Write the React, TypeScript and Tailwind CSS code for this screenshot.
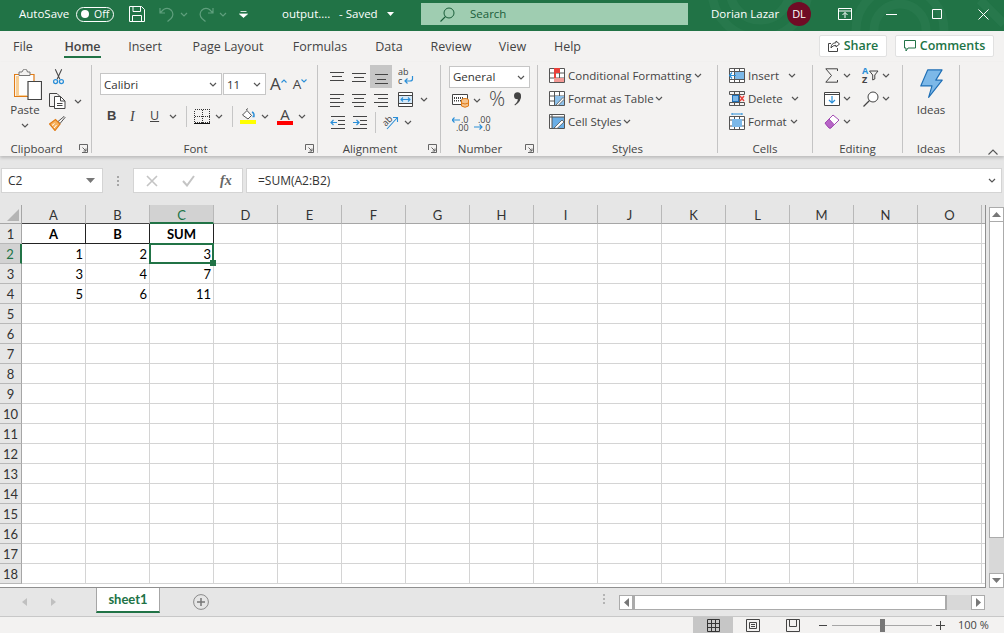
import React from "react";

const UI = "font-['Open_Sans','Noto_Sans',sans-serif]";
const CELL = "font-['Lato','Noto_Sans',sans-serif]";
const BLUE = "#2b8fd8";

function Chev({ color = "#555" }: { color?: string }) {
  return (
    <svg width="8" height="5" viewBox="0 0 8 5" className="shrink-0">
      <path d="M1 1 L4 4 L7 1" fill="none" stroke={color} strokeWidth="1.2" />
    </svg>
  );
}

function Launcher() {
  return (
    <svg width="9" height="9" viewBox="0 0 9 9" className="absolute right-[3px] top-[2px]">
      <path d="M.5 6V.5H8.500V8.500H3M3.500 3.500L7 7M7 4.500V7H4.500" fill="none" stroke="#666" strokeWidth="1" />
    </svg>
  );
}

function Lines({ rows, y = 0 }: { rows: number[][]; y?: number }) {
  return (
    <svg width="16" height="14" viewBox="0 0 16 14" className="shrink-0">
      {rows.map((r, i) => (
        <path key={i} d={`M${r[0]} ${r[2] + 0.5 + y}H${r[1]}`} stroke="#444" strokeWidth="1" />
      ))}
    </svg>
  );
}

function Indent({ out }: { out?: boolean }) {
  return (
    <svg width="16" height="14" viewBox="0 0 16 14" className="shrink-0">
      <path d="M1 .5H15M8 4.500H15M8 8.500H15M1 12.500H15" stroke="#444" strokeWidth="1" />
      {out ? (
        <path d="M1 6.500H7M3.500 4L1 6.500L3.500 9" stroke={BLUE} strokeWidth="1.2" fill="none" />
      ) : (
        <path d="M1 6.500H7M4.500 4L7 6.500L4.500 9" stroke={BLUE} strokeWidth="1.2" fill="none" />
      )}
    </svg>
  );
}

function PasteIcon() {
  return (
    <svg width="28" height="31" viewBox="0 0 28 31">
      <path d="M.5 5.500H20V27.500H.5Z" fill="#fdfdfd" stroke="#e07b16" strokeWidth="1.2" />
      <path d="M2 7H5V26H13V27H2Z" fill="#f8cf95" />
      <path d="M5 5V3H8Q9 0 11 0Q13 0 13.500 3H16V6.500H5Z" fill="#f3f2f1" stroke="#777" strokeWidth="1" />
      <path d="M14 12.500H27.500V30.500H14Z" fill="#fff" stroke="#444" strokeWidth="1.200" />
    </svg>
  );
}

function CutIcon() {
  return (
    <svg width="11" height="16" viewBox="0 0 12 17">
      <path d="M2.500 0L7.500 11M9.500 0L4.500 11" stroke="#444" strokeWidth="1.100" fill="none" />
      <circle cx="2.800" cy="13.500" r="2.200" fill="none" stroke={BLUE} strokeWidth="1.400" />
      <circle cx="9.200" cy="13.500" r="2.200" fill="none" stroke={BLUE} strokeWidth="1.400" />
    </svg>
  );
}

function CopyIcon() {
  return (
    <svg width="17" height="16" viewBox="0 0 17 16">
      <path d="M5 13.500H.5V.5H8L11 3.500" fill="none" stroke="#444" />
      <path d="M5.500 3.500H11.500L16 8V15.500H5.500Z" fill="#fff" stroke="#444" />
      <path d="M11.500 3.500V8H16M8 10.500H13.500M8 12.500H13.500" fill="none" stroke="#444" />
    </svg>
  );
}

function BrushIcon() {
  return (
    <svg width="17" height="15" viewBox="0 0 17 15">
      <path d="M9 5.500L11 7.500L16 1.500L15 .5Z" fill="#f3f2f1" stroke="#555" />
      <path d="M.5 8L6.500 3.500L11 8L6 14.500Z" fill="#f7b15e" stroke="#e07b16" strokeWidth="1.200" />
      <path d="M3 9.500L5.500 7.500M5 12L7.500 9" stroke="#fff" />
    </svg>
  );
}

function GrowA({ up }: { up?: boolean }) {
  return (
    <span className="relative flex items-end">
      <span className={`${UI} ${up ? "text-[17px]" : "text-[13.500px]"} leading-[16px] text-[#444]`}>A</span>
      <svg width="6" height="4" viewBox="0 0 6 4" className="mb-[9px]">
        {up ? (
          <path d="M.5 3.500L3 1L5.500 3.500" stroke={BLUE} fill="none" strokeWidth="1.100" />
        ) : (
          <path d="M.5 .5L3 3L5.500 .5" stroke={BLUE} fill="none" strokeWidth="1.100" />
        )}
      </svg>
    </span>
  );
}

function BorderIcon() {
  return (
    <svg width="16" height="15" viewBox="0 0 16 15" shapeRendering="crispEdges">
      <path d="M.5 .5H15.500V13.500H.5ZM8 .5V13.500M.5 7H15.500" fill="none" stroke="#333" strokeDasharray="1 1" />
      <path d="M0 14.500H16" stroke="#111" strokeWidth="1.200" />
    </svg>
  );
}

function FillIcon() {
  return (
    <svg width="16" height="16" viewBox="0 0 16 16">
      <path d="M2.500 7L7 2.500L11.500 7.500L8 11Z" fill="#fff" stroke="#555" />
      <path d="M6 2L8 0.500" stroke="#555" />
      <path d="M12 4Q14.500 5 14 8.500H12.500" fill="none" stroke={BLUE} strokeWidth="1.400" />
      <rect x="0" y="12" width="16" height="4" fill="#ffff00" />
    </svg>
  );
}

function FontColorIcon() {
  return (
    <span className="flex flex-col items-center w-[16px]">
      <span className={`${UI} text-[15px] leading-[13px] text-[#444]`}>A</span>
      <span className="w-[16px] h-[4px] bg-[#ff0000]" />
    </span>
  );
}

function WrapIcon() {
  return (
    <span className="relative flex flex-col w-[16px] h-[17px] leading-[8px] text-[9px] text-[#444]">
      <span className="h-[8px]">ab</span>
      <span className="h-[9px] pt-[1px]">c</span>
      <svg className="absolute left-0 top-0" width="16" height="17" viewBox="0 0 16 17">
        <path d="M14.500 8V11Q14.500 13 12 13H7M9.500 10.500L7 13L9.500 15.500" fill="none" stroke={BLUE} strokeWidth="1.200" />
      </svg>
    </span>
  );
}

function MergeIcon() {
  return (
    <svg width="15" height="15" viewBox="0 0 15 15">
      <path d="M.5 .5H14.500V14.500H.5ZM.5 3.500H14.500M.5 11.500H14.500" fill="#fff" stroke="#444" />
      <rect x="1" y="4" width="13" height="7" fill="#d6e9f8" />
      <path d="M3 7.500H12M5 5.500L3 7.500L5 9.500M10 5.500L12 7.500L10 9.500" fill="none" stroke={BLUE} strokeWidth="1.100" />
    </svg>
  );
}

function OrientIcon() {
  return (
    <span className="relative block w-[17px] h-[15px]">
      <span className="absolute left-[0px] top-[1px] text-[9px] leading-[10px] text-[#444] -rotate-45">ab</span>
      <svg className="absolute left-0 top-0" width="17" height="15" viewBox="0 0 17 15">
        <path d="M5 14L15 3M11 2.500H15.500V7" fill="none" stroke={BLUE} strokeWidth="1.100" />
      </svg>
    </span>
  );
}

function AccountingIcon() {
  return (
    <svg width="18" height="15" viewBox="0 0 18 15">
      <path d="M.5 1.500H15.500V11.500H.5Z" fill="#fff" stroke="#444" />
      <path d="M2.500 4V8.500M4.500 4V8.500M6.500 4V8.500M8.500 4V8.500M10.500 4V8.500" stroke="#444" strokeDasharray="2 1" />
      <ellipse cx="13" cy="7" rx="3.500" ry="1.500" fill="#f5c38d" stroke="#e07b16" />
      <path d="M9.500 7V13Q13 15.500 16.500 13V7" fill="#f5c38d" stroke="#e07b16" />
      <path d="M9.500 10Q13 12 16.500 10" fill="none" stroke="#e07b16" />
    </svg>
  );
}

function DecimalIcon({ more }: { more?: boolean }) {
  const t = "absolute text-[9px] leading-[8px] text-[#444]";
  return (
    <span className="relative block w-[17px] h-[16px]">
      {more ? (
        <>
          <span className={`${t} left-[4px] top-0`}>.00</span>
          <span className={`${t} left-[9px] top-[8px]`}>.0</span>
          <svg className="absolute left-0 top-[7px]" width="9" height="8" viewBox="0 0 9 8">
            <path d="M0 4H8M5.500 1.500L8 4L5.500 6.500" fill="none" stroke={BLUE} strokeWidth="1.100" />
          </svg>
        </>
      ) : (
        <>
          <span className={`${t} left-[9px] top-0`}>.0</span>
          <span className={`${t} left-[4px] top-[8px]`}>.00</span>
          <svg className="absolute left-0 top-0" width="9" height="8" viewBox="0 0 9 8">
            <path d="M0 4H8M2.500 1.500L0 4L2.500 6.500" fill="none" stroke={BLUE} strokeWidth="1.100" />
          </svg>
        </>
      )}
    </span>
  );
}

function CommaIcon() {
  return (
    <svg width="9" height="14" viewBox="0 0 9 14">
      <circle cx="4.500" cy="3.800" r="3.500" fill="#444" />
      <path d="M8 3.500Q8.500 9.500 2 13.500L1.500 12.500Q5 10 5 6Z" fill="#444" />
    </svg>
  );
}

function TableBase({ children }: { children?: React.ReactNode }) {
  return (
    <svg width="16" height="15" viewBox="0 0 16 15" className="shrink-0">
      <path d="M.5 .5H15.500V14.500H.5ZM5.500 .5V14.500M10.500 .5V14.500M.5 5H15.500M.5 10H15.500" fill="#fff" stroke="#555" />
      {children}
    </svg>
  );
}

function CondIcon() {
  return (
    <TableBase>
      <rect x="5" y="0" width="6" height="5" fill="#e8403a" />
      <rect x="5" y="5" width="2" height="5" fill="#e8403a" />
      <rect x="5" y="10" width="10" height="4" fill="#f49a96" />
    </TableBase>
  );
}

function TableFmtIcon() {
  return (
    <TableBase>
      <rect x="6" y="5" width="9" height="9" fill="#8cc0ea" />
      <path d="M7 14L14 6.500L15.500 8L9 14.500Z" fill="#fff" stroke="#555" strokeWidth=".8" />
    </TableBase>
  );
}

function CellStyleIcon() {
  return (
    <svg width="16" height="15" viewBox="0 0 16 15" className="shrink-0">
      <path d="M.5 .5H15.500V14.500H.5Z" fill="#fff" stroke="#555" />
      <rect x="3" y="3" width="12" height="11" fill="#6aaee6" />
      <path d="M.5 3H15.500M3 .5V14.500" stroke="#555" />
      <path d="M5 14L13 6L15 8L8 14.500Z" fill="#fff" stroke="#555" strokeWidth=".8" />
    </svg>
  );
}

function InsertIcon() {
  return (
    <svg width="16" height="15" viewBox="0 0 16 15" className="shrink-0">
      <path d="M.5 .5H15.500V14.500H.5ZM.5 3.500H15.500M.5 11.500H15.500M5.500 .5V14.500M10.500 .5V14.500" fill="#fff" stroke="#555" />
      <rect x="6" y="4" width="9" height="7" fill="#7cb8e8" />
      <path d="M0 7.500H7M3 4.500L0.500 7.500L3 10.500" fill="#fff" stroke={BLUE} strokeWidth="1.200" />
    </svg>
  );
}

function DeleteIcon() {
  return (
    <svg width="16" height="15" viewBox="0 0 16 15" className="shrink-0">
      <path d="M.5 .5H15.500M.5 14.500H15.500M.5 3.500H15.500M.5 11.500H15.500M5.500 .5V14.500M10.500 .5V14.500M.5 .5V3.500M15.500 .5V3.500M.5 11.500V14.500M15.500 11.500V14.500" fill="none" stroke="#555" />
      <rect x="3.500" y="4.500" width="6" height="6" fill="#7cb8e8" stroke="#1f6fb5" />
      <path d="M11 5L15 10M15 5L11 10" stroke="#e8403a" strokeWidth="1.400" />
    </svg>
  );
}

function FormatIcon() {
  return (
    <svg width="16" height="17" viewBox="0 0 16 17" className="shrink-0">
      <path d="M.5 3.500H15.500V16.500H.5ZM.5 7H15.500M.5 13H15.500M5.500 3.500V16.500M10.500 3.500V16.500" fill="#fff" stroke="#555" />
      <rect x="3" y="6" width="10" height="8" fill="#7cb8e8" />
      <path d="M3 1H13M3 0V2M13 0V2" stroke={BLUE} />
    </svg>
  );
}

function SigmaIcon() {
  return (
    <svg width="13" height="15" viewBox="0 0 13 15">
      <path d="M12.500 3V.8H.8L6.500 7.500L.8 14.200H12.500V12" fill="none" stroke="#444" strokeWidth="1" />
    </svg>
  );
}

function SortIcon() {
  return (
    <span className="relative block w-[17px] h-[17px]">
      <span className="absolute left-0 top-0 text-[9px] leading-[8px] font-bold text-[#2b8fd8]">A</span>
      <span className="absolute left-0 top-[9px] text-[9px] leading-[8px] font-bold text-[#444]">Z</span>
      <svg className="absolute left-0 top-0" width="17" height="17" viewBox="0 0 17 17">
        <path d="M7.500 4H16L12.800 8V12L10.700 13V8Z" fill="none" stroke="#444" />
      </svg>
    </span>
  );
}

function FillDown() {
  return (
    <svg width="16" height="14" viewBox="0 0 16 14">
      <path d="M.5 .5H15.500V13.500H.5Z" fill="#fff" stroke="#444" />
      <path d="M.5 2.500H15.500" stroke="#444" />
      <path d="M8 4V11M5 8L8 11L11 8" fill="none" stroke={BLUE} strokeWidth="1.200" />
    </svg>
  );
}

function FindIcon() {
  return (
    <svg width="16" height="16" viewBox="0 0 16 16">
      <circle cx="10" cy="6" r="5" fill="#fff" stroke="#444" />
      <path d="M6.500 9.500L.5 15.500" stroke="#444" strokeWidth="1.300" />
    </svg>
  );
}

function EraserIcon() {
  return (
    <svg width="16" height="15" viewBox="0 0 16 15">
      <path d="M1 9L9 1L15 6L7 14H5Z" fill="#fff" stroke="#a24bb2" />
      <path d="M1 9L5 5L10 10.500L7 14H5Z" fill="#b765c7" stroke="#a24bb2" />
    </svg>
  );
}

function Bolt() {
  return (
    <svg width="23" height="30" viewBox="0 0 24 31">
      <path d="M8 .8H23L16.500 11.500H23.200L9 29.500L12.500 17.500H.8Z" fill="#7cb8e8" stroke="#1f6fb5" strokeWidth="1.200" strokeLinejoin="round" />
    </svg>
  );
}

function Group({ className, label, launcher, children }: { className: string; label: string; launcher?: boolean; children: React.ReactNode }) {
  return (
    <div className={`${className} h-[88px] shrink-0 flex flex-col border-r border-[#c4c4c4]`}>
      <div className="h-[77px]">{children}</div>
      <div className={`relative h-[11px] flex items-center justify-center ${launcher ? "pr-[18px]" : ""}`}>
        <span className={`${UI} text-[11.500px] leading-[14px] text-[#444] mt-[2px]`}>{label}</span>
        {launcher && <Launcher />}
      </div>
    </div>
  );
}

const Txt = ({ children }: { children: React.ReactNode }) => (
  <span className={`${UI} text-[11.500px] leading-[16px] text-[#444] whitespace-nowrap`}>{children}</span>
);

const COLS = "ABCDEFGHIJKLMNO".split("");
const ROWS = Array.from({ length: 18 }, (_, i) => i + 1);
const DATA: Record<string, string> = {
  A1: "A", B1: "B", C1: "SUM",
  A2: "1", B2: "2", C2: "3",
  A3: "3", B3: "4", C3: "7",
  A4: "5", B4: "6", C4: "11",
};

function GridCell({ col, row }: { col: string; row: number }) {
  const key = col + row;
  const v = DATA[key];
  const isHead = row === 1 && "ABC".includes(col);
  const selected = key === "C2";
  return (
    <div
      className={`relative w-[64px] h-[20px] shrink-0 border-r border-b ${CELL} text-[13px] leading-[20px] text-black ${
        isHead ? "border-[#222] font-bold text-center" : "border-[#d4d4d4] text-right pr-[2px]"
      } ${selected ? "z-10" : ""}`}
    >
      {v}
      {selected && (
        <>
          <span className="absolute left-[-1px] top-[-1px] w-[65px] h-[21px] border-2 border-[#217346]" />
          <span className="absolute right-[-3px] bottom-[-3px] w-[6px] h-[6px] bg-[#217346]" />
        </>
      )}
    </div>
  );
}

function Sheet() {
  return (
    <div className="flex-1 min-w-0 h-[383px] overflow-hidden border-r border-b border-[#8f8f8f]">
      <div className="flex h-[19px]">
        <div className="w-[22px] shrink-0 bg-[#e6e6e6] border-b border-r border-[#a6a6a6] flex items-end justify-end pr-[2px] pb-[2px]">
          <svg width="12" height="12" viewBox="0 0 12 12"><path d="M12 0V12H0Z" fill="#b4b4b4" /></svg>
        </div>
        {COLS.map((c) => (
          <div
            key={c}
            className={`${CELL} w-[64px] shrink-0 text-center text-[13px] leading-[20px] border-r ${
              c === "C"
                ? "bg-[#d2d2d2] text-[#217346] border-b-2 border-b-[#217346] border-r-[#b8b8b8]"
                : c === "A" || c === "B"
                ? "bg-[#e6e6e6] text-[#333] border-b border-b-[#444] border-r-[#b8b8b8]"
                : "bg-[#e6e6e6] text-[#333] border-b border-b-[#a6a6a6] border-r-[#b8b8b8]"
            }`}
          >
            {c}
          </div>
        ))}
        <div className="flex-1 bg-[#e6e6e6] border-b border-[#a6a6a6]" />
      </div>
      {ROWS.map((r) => (
        <div key={r} className="flex h-[20px]">
          <div
            className={`${CELL} w-[22px] shrink-0 text-center text-[13px] leading-[20px] border-b ${
              r === 2
                ? "bg-[#d2d2d2] text-[#217346] border-r-2 border-r-[#217346] border-b-[#b8b8b8]"
                : "bg-[#e6e6e6] text-[#333] border-r border-r-[#a6a6a6] border-b-[#b8b8b8]"
            }`}
          >
            {r}
          </div>
          {COLS.map((c) => (
            <GridCell key={c} col={c} row={r} />
          ))}
          <div className="flex-1 border-b border-[#d4d4d4]" />
        </div>
      ))}
    </div>
  );
}

function ScrollBtn({ dir }: { dir: "up" | "down" | "left" | "right" }) {
  const d = { up: "M0 5L4.500 0L9 5Z", down: "M0 0L4.500 5L9 0Z", left: "M5 0L0 4.500L5 9Z", right: "M0 0L5 4.500L0 9Z" }[dir];
  const vertical = dir === "up" || dir === "down";
  return (
    <div className={`flex items-center justify-center bg-white border border-[#ababab] shrink-0 ${vertical ? "w-[15px] h-[15px]" : "w-[14px] h-[15px]"}`}>
      <svg width={vertical ? 9 : 5} height={vertical ? 5 : 9} viewBox={vertical ? "0 0 9 5" : "0 0 5 9"}>
        <path d={d} fill="#777" />
      </svg>
    </div>
  );
}

export default function App() {
  return (
    <div className={`${UI} w-[1004px] h-[633px] overflow-hidden flex flex-col bg-[#e6e6e6]`}>
      {/* Title bar */}
      <div className="relative h-[31px] shrink-0 bg-[#217346] flex items-center text-white text-[11.500px] overflow-hidden">
        <svg className="absolute left-[690px] top-0" width="314" height="31" viewBox="0 0 314 31">
          <g fill="none" stroke="#27784c" strokeWidth="9">
            <circle cx="70" cy="-10" r="30" />
            <circle cx="70" cy="-10" r="48" />
            <circle cx="210" cy="30" r="26" />
            <circle cx="210" cy="30" r="44" />
            <path d="M290 0L314 24" />
          </g>
        </svg>
        <div className="relative flex items-center w-full h-full pb-[3px]">
          <span className="ml-[19px] w-[53px] whitespace-nowrap">AutoSave</span>
          <span className="ml-[4px] w-[38px] h-[15px] rounded-full border border-white flex items-center pl-[4px] gap-[5px] text-[10.500px] leading-none">
            <span className="w-[8px] h-[8px] rounded-full bg-white" />Off
          </span>
          <svg className="ml-[15px]" width="16" height="16" viewBox="0 0 16 16">
            <path d="M.5 .5H12.500L15.500 3.500V15.500H.5ZM4 .5V5.500H11.500V.5M3.500 15.500V9.500H12.500V15.500" fill="none" stroke="#fff" />
          </svg>
          <svg className="ml-[14px]" width="15" height="15" viewBox="0 0 15 15">
            <path d="M1 1V6H6M1 6L4.500 2.500Q9 0 12.500 3.500Q15.500 7.500 12 11.500L8.500 14.500" fill="none" stroke="#5f9f7d" strokeWidth="1.200" />
          </svg>
          <span className="ml-[6px]"><Chev color="#5f9f7d" /></span>
          <svg className="ml-[11px]" width="15" height="15" viewBox="0 0 15 15">
            <path d="M14 1V6H9M14 6L10.500 2.500Q6 0 2.500 3.500Q-.5 7.500 3 11.500L6.500 14.500" fill="none" stroke="#5f9f7d" strokeWidth="1.200" />
          </svg>
          <span className="ml-[5px]"><Chev color="#5f9f7d" /></span>
          <svg className="ml-[12px]" width="9" height="7" viewBox="0 0 9 7">
            <path d="M1.500 .5H7.500M.5 3L4.500 6.500L8.500 3Z" fill="#fff" stroke="#fff" strokeWidth=".8" />
          </svg>
          <span className="ml-[34px] w-[47px] whitespace-nowrap">output....</span>
          <span className="ml-[10px] w-[41px] whitespace-nowrap">- Saved</span>
          <svg className="ml-[7px]" width="7" height="4" viewBox="0 0 7 4"><path d="M0 0H7L3.500 4Z" fill="#fff" /></svg>
          <div className="ml-[27px] w-[267px] h-[22px] bg-[#9fcdb1] flex items-center text-[#1b5e3a]">
            <svg className="ml-[19px]" width="15" height="15" viewBox="0 0 15 15">
              <circle cx="9" cy="6" r="5" fill="none" stroke="#1b5e3a" />
              <path d="M5.500 9.500L.5 14.500" stroke="#1b5e3a" strokeWidth="1.100" />
            </svg>
            <span className="ml-[15px]">Search</span>
          </div>
          <span className="ml-[23px] w-[66px] whitespace-nowrap">Dorian Lazar</span>
          <span className="ml-[10px] w-[24px] h-[24px] rounded-full bg-[#6f0b25] flex items-center justify-center text-[11px]">DL</span>
          <svg className="ml-[27px]" width="14" height="12" viewBox="0 0 14 12">
            <path d="M.5 .5H13.500V11.500H.5ZM.5 3H13.500M7 10V4.500M4.500 7L7 4.500L9.500 7" fill="none" stroke="#fff" />
          </svg>
          <svg className="ml-[34px]" width="11" height="1" viewBox="0 0 11 1"><path d="M0 .5H11" stroke="#fff" /></svg>
          <svg className="ml-[35px]" width="10" height="10" viewBox="0 0 10 10"><path d="M.5 .5H9.500V9.500H.5Z" fill="none" stroke="#fff" /></svg>
          <svg className="ml-[36px]" width="11" height="11" viewBox="0 0 11 11"><path d="M.5 .5L10.500 10.500M10.500 .5L.5 10.500" stroke="#fff" /></svg>
        </div>
      </div>

      {/* Tabs */}
      <div className="h-[31px] shrink-0 bg-[#f3f2f1] flex text-[12.500px] text-[#444]">
        {[
          ["File", "ml-[6px] w-[34px]"],
          ["Home", "ml-[24px] w-[37px]"],
          ["Insert", "ml-[21px] w-[46px]"],
          ["Page Layout", "ml-[18px] w-[84px]"],
          ["Formulas", "ml-[17px] w-[66px]"],
          ["Data", "ml-[16px] w-[40px]"],
          ["Review", "ml-[16px] w-[52px]"],
          ["View", "ml-[16px] w-[39px]"],
          ["Help", "ml-[16px] w-[39px]"],
        ].map(([t, c]) => (
          <div key={t} className={`${c} relative h-full pt-[1px] flex items-center justify-center whitespace-nowrap ${t === "Home" ? "font-semibold" : ""}`}>
            {t}
            {t === "Home" && <span className="absolute left-0 right-0 top-[25px] h-[2px] bg-[#217346]" />}
          </div>
        ))}
        <div className="flex-1" />
        <div className="mt-[4px] mr-[8px] w-[68px] h-[22px] bg-white border border-[#e1e1e1] rounded-[2px] flex items-center justify-center gap-[4px] font-semibold text-[#217346] text-[12.500px]">
          <svg width="12" height="12" viewBox="0 0 12 12">
            <path d="M8 1L11.500 4L8 7V5.300Q4.500 5.300 3 8Q3 3 8 2.700ZM9.500 8V11.500H.5V3.500H3" fill="none" stroke="#444" />
          </svg>
          Share
        </div>
        <div className="mt-[4px] mr-[10px] w-[99px] h-[22px] bg-white border border-[#e1e1e1] rounded-[2px] flex items-center justify-center gap-[4px] font-semibold text-[#217346] text-[12.500px]">
          <svg width="12" height="12" viewBox="0 0 12 12">
            <path d="M.5 .5H11.500V8H4L2 11V8H.5Z" fill="none" stroke="#217346" />
          </svg>
          Comments
        </div>
      </div>

      {/* Ribbon */}
      <div className="h-[94px] shrink-0 bg-[#f3f2f1] pt-[3px] flex shadow-[0_2px_3px_rgba(0,0,0,0.18)] relative">
        <Group className="w-[92px]" label="Clipboard" launcher>
          <div className="flex pl-[8px] pt-[4px]">
            <div className="w-[34px] flex flex-col items-center">
              <span className="ml-[5px]"><PasteIcon /></span>
              <span className={`${UI} mt-[2px] text-[11.500px] leading-[16px] text-[#444]`}>Paste</span>
              <span className="mt-[5px]"><Chev /></span>
            </div>
            <div className="ml-[7px] flex flex-col items-start">
              <span className="ml-[4px]"><CutIcon /></span>
              <span className="mt-[8px] flex items-center gap-[8px]"><CopyIcon /><Chev /></span>
              <span className="mt-[7px]"><BrushIcon /></span>
            </div>
          </div>
        </Group>

        <Group className="w-[226px]" label="Font" launcher>
          <div className="pl-[8px] pt-[8px]">
            <div className="flex items-center">
              <div className="w-[122px] h-[22px] pt-[1px] bg-white border border-[#c6c6c6] flex items-center justify-between pl-[3px] pr-[4px] text-[11.500px] text-[#333]">
                Calibri <Chev />
              </div>
              <div className="ml-[1px] w-[43px] h-[22px] pt-[1px] bg-white border border-[#c6c6c6] flex items-center justify-between pl-[3px] pr-[4px] text-[11.500px] text-[#333]">
                11 <Chev />
              </div>
              <span className="ml-[4px]"><GrowA up /></span>
              <span className="ml-[6px]"><GrowA /></span>
            </div>
            <div className="flex items-center h-[22px] mt-[10px]">
              <span className="ml-[7px] w-[8px] font-['Liberation_Sans',sans-serif] font-bold text-[13px] text-[#444]">B</span>
              <span className="ml-[15px] w-[7px] font-['Liberation_Serif',serif] italic text-[14px] text-[#444]">I</span>
              <span className="ml-[13px] w-[9px] underline text-[12.500px] text-[#444]">U</span>
              <span className="ml-[10px]"><Chev /></span>
              <span className="ml-[9px] w-px h-[21px] bg-[#c6c6c6]" />
              <span className="ml-[7px]"><BorderIcon /></span>
              <span className="ml-[5px]"><Chev /></span>
              <span className="ml-[9px] w-px h-[21px] bg-[#c6c6c6]" />
              <span className="ml-[7px]"><FillIcon /></span>
              <span className="ml-[5px]"><Chev /></span>
              <span className="ml-[8px]"><FontColorIcon /></span>
              <span className="ml-[5px]"><Chev /></span>
            </div>
          </div>
        </Group>

        <Group className="w-[123px]" label="Alignment" launcher>
          <div className="pl-[12px]">
            <div className="flex items-center h-[23px]">
              <Lines rows={[[0, 14, 3], [2, 12, 7], [0, 14, 11]]} y={-1} />
              <span className="ml-[6px]"><Lines rows={[[0, 14, 3], [2, 12, 7], [0, 14, 11]]} y={0} /></span>
              <span className="ml-[2px] w-[22px] h-[23px] bg-[#c6c6c6] flex items-center justify-center"><Lines rows={[[2, 15, 4], [4, 13, 9], [2, 15, 13]]} /></span>
              <span className="ml-[6px]"><WrapIcon /></span>
            </div>
            <div className="flex items-center h-[23px]">
              <Lines rows={[[0, 14, 1], [0, 10, 5], [0, 14, 9], [0, 10, 13]]} />
              <span className="ml-[6px]"><Lines rows={[[0, 14, 1], [2, 12, 5], [0, 14, 9], [2, 12, 13]]} /></span>
              <span className="ml-[6px]"><Lines rows={[[0, 14, 1], [4, 14, 5], [0, 14, 9], [4, 14, 13]]} /></span>
              <span className="ml-[8px]"><MergeIcon /></span>
              <span className="ml-[7px]"><Chev /></span>
            </div>
            <div className="flex items-center h-[23px]">
              <Indent out />
              <span className="ml-[6px]"><Indent /></span>
              <span className="ml-[7px] w-px h-[21px] bg-[#c6c6c6]" />
              <span className="ml-[6px]"><OrientIcon /></span>
              <span className="ml-[5px]"><Chev /></span>
            </div>
          </div>
        </Group>

        <Group className="w-[97px]" label="Number" launcher>
          <div className="pl-[8px] pt-[1px]">
            <div className="w-[81px] h-[22px] bg-white border border-[#c6c6c6] flex items-center justify-between pl-[3px] pr-[4px] text-[11.500px] text-[#333]">
              General <Chev />
            </div>
            <div className="flex items-center h-[25px] pl-[3px]">
              <AccountingIcon />
              <span className="ml-[3px]"><Chev /></span>
              <span className="ml-[8px] text-[20px] leading-[20px] font-light text-[#444] -mt-[3px]">%</span>
              <span className="ml-[8px] -mt-[3px]"><CommaIcon /></span>
            </div>
            <div className="flex items-center h-[22px] pl-[3px] gap-[5px]">
              <DecimalIcon />
              <DecimalIcon more />
            </div>
          </div>
        </Group>

        <Group className="w-[180px]" label="Styles">
          <div className="pl-[11px] -mt-[1px]">
            <div className="flex items-center h-[23px] gap-[3px]"><CondIcon /><Txt>Conditional Formatting</Txt><Chev /></div>
            <div className="flex items-center h-[23px] gap-[3px]"><TableFmtIcon /><Txt>Format as Table</Txt><span className="-ml-[2px]"><Chev /></span></div>
            <div className="flex items-center h-[23px] gap-[3px]"><CellStyleIcon /><Txt>Cell Styles</Txt><span className="-ml-[2px]"><Chev /></span></div>
          </div>
        </Group>

        <Group className="w-[95px]" label="Cells">
          <div className="pl-[11px] -mt-[1px]">
            <div className="flex items-center h-[23px] gap-[3px]"><InsertIcon /><Txt>Insert</Txt><span className="ml-[6px]"><Chev /></span></div>
            <div className="flex items-center h-[23px] gap-[3px]"><DeleteIcon /><Txt>Delete</Txt><span className="ml-[5px]"><Chev /></span></div>
            <div className="flex items-center h-[23px] gap-[3px]"><FormatIcon /><Txt>Format</Txt><Chev /></div>
          </div>
        </Group>

        <Group className="w-[90px]" label="Editing">
          <div className="pl-[12px] -mt-[1px]">
            <div className="flex items-center h-[23px]">
              <SigmaIcon />
              <span className="ml-[5px]"><Chev /></span>
              <span className="ml-[11px]"><SortIcon /></span>
              <span className="ml-[3px]"><Chev /></span>
            </div>
            <div className="flex items-center h-[23px] -ml-[1px]">
              <FillDown />
              <span className="ml-[3px]"><Chev /></span>
              <span className="ml-[12px]"><FindIcon /></span>
              <span className="ml-[3px]"><Chev /></span>
            </div>
            <div className="flex items-center h-[23px] -ml-[1px]">
              <EraserIcon />
              <span className="ml-[3px]"><Chev /></span>
            </div>
          </div>
        </Group>

        <Group className="w-[57px]" label="Ideas">
          <div className="flex flex-col items-center pt-[4px]">
            <Bolt />
            <span className={`${UI} mt-[3px] text-[11.500px] leading-[16px] text-[#444]`}>Ideas</span>
          </div>
        </Group>

        <div className="flex-1 flex items-end justify-end pr-[6px] pb-[1px]">
          <svg width="10" height="6" viewBox="0 0 10 6"><path d="M.5 5.500L5 1L9.500 5.500" fill="none" stroke="#555" strokeWidth="1.100" /></svg>
        </div>
      </div>

      {/* Formula bar */}
      <div className="h-[49px] shrink-0 flex items-start pt-[12px] pl-[1px] pr-[2px]">
        <div className="w-[102px] h-[25px] bg-white border border-[#d4d4d4] flex items-center justify-between pl-[6px] pr-[7px] text-[12px] text-[#333]">
          C2
          <svg width="9" height="5" viewBox="0 0 9 5"><path d="M0 0H9L4.500 5Z" fill="#777" /></svg>
        </div>
        <div className="w-[30px] h-[25px] flex flex-col items-center justify-center gap-[2px]">
          <span className="w-[2px] h-[2px] bg-[#a6a6a6]" />
          <span className="w-[2px] h-[2px] bg-[#a6a6a6]" />
          <span className="w-[2px] h-[2px] bg-[#a6a6a6]" />
        </div>
        <div className="w-[110px] h-[25px] bg-white border border-[#d4d4d4] flex items-center">
          <svg className="ml-[12px]" width="12" height="12" viewBox="0 0 12 12"><path d="M1 1L11 11M11 1L1 11" stroke="#c4c4c4" strokeWidth="1.600" /></svg>
          <svg className="ml-[24px]" width="13" height="12" viewBox="0 0 13 12"><path d="M1 6L5 10.500L12 1" fill="none" stroke="#c4c4c4" strokeWidth="2" /></svg>
          <span className="ml-[25px] font-['Liberation_Serif',serif] italic font-bold text-[14px] text-[#666]">fx</span>
        </div>
        <div className="ml-[3px] flex-1 h-[25px] bg-white border border-[#d4d4d4] flex items-center justify-between pl-[11px] pr-[5px] text-[12px] text-[#333]">
          =SUM(A2:B2)
          <Chev />
        </div>
      </div>

      {/* Grid + scrollbar */}
      <div className="h-[383px] shrink-0 flex bg-white">
        <Sheet />
        <div className="w-[18px] shrink-0 bg-[#e6e6e6] pl-[3px] pt-[2px] flex flex-col">
          <ScrollBtn dir="up" />
          <div className="w-[15px] h-[316px] shrink-0 bg-white border-x border-b border-[#ababab]" />
          <div className="w-[15px] flex-1 bg-[#d8d8d8]" />
          <ScrollBtn dir="down" />
        </div>
      </div>

      {/* Sheet tabs */}
      <div className="h-[28px] shrink-0 bg-[#e6e6e6] flex items-start">
        <svg className="ml-[22px] mt-[10px]" width="5" height="8" viewBox="0 0 5 8"><path d="M5 0L0 4L5 8Z" fill="#c0c0c0" /></svg>
        <svg className="ml-[24px] mt-[10px]" width="5" height="8" viewBox="0 0 5 8"><path d="M0 0L5 4L0 8Z" fill="#c0c0c0" /></svg>
        <div className={`${CELL} ml-[40px] w-[64px] h-[25px] bg-white border-x border-[#a6a6a6] border-b-2 border-b-[#217346] flex items-center justify-center text-[13px] font-bold text-[#217346]`}>
          sheet1
        </div>
        <svg className="ml-[33px] mt-[6px]" width="16" height="16" viewBox="0 0 16 16">
          <circle cx="8" cy="8" r="7.400" fill="none" stroke="#8a8a8a" />
          <path d="M4 8H12M8 4V12" stroke="#777" strokeWidth="1.500" />
        </svg>
        <div className="ml-[394px] mt-[6px] flex flex-col gap-[2px]">
          <span className="w-[2px] h-[2px] bg-[#b4b4b4]" />
          <span className="w-[2px] h-[2px] bg-[#b4b4b4]" />
          <span className="w-[2px] h-[2px] bg-[#b4b4b4]" />
        </div>
        <div className="ml-[14px] mt-[7px] flex w-[366px] h-[15px]">
          <ScrollBtn dir="left" />
          <div className="w-[314px] h-[15px] bg-white border-y border-x-2 border-[#ababab]" />
          <div className="flex-1 bg-[#d8d8d8]" />
          <ScrollBtn dir="right" />
        </div>
      </div>

      {/* Status bar */}
      <div className="h-[18px] shrink-0 bg-[#f3f2f1] border-t border-[#c8c8c8] flex items-stretch">
        <div className="ml-[693px] w-[40px] bg-[#c6c6c6] flex items-center justify-center">
          <svg width="13" height="13" viewBox="0 0 13 13"><path d="M.5 .5H12.500V12.500H.5ZM4.500 .5V12.500M8.500 .5V12.500M.5 4.500H12.500M.5 8.500H12.500" fill="none" stroke="#333" /></svg>
        </div>
        <div className="w-[40px] flex items-center justify-center">
          <svg width="14" height="13" viewBox="0 0 14 13"><path d="M.5 .5H13.500V12.500H.5ZM3.500 3.500H10.500V9.500H3.500ZM5 5.500H9M5 7.500H9" fill="none" stroke="#444" /></svg>
        </div>
        <div className="w-[40px] flex items-center justify-center">
          <svg width="14" height="13" viewBox="0 0 14 13"><path d="M.5 .5H13.500V12.500H.5ZM3.500 .5V7.500H10.500V.5" fill="none" stroke="#444" /></svg>
        </div>
        <div className="ml-[6px] flex items-center">
          <span className="w-[8px] h-px bg-[#444]" />
          <div className="ml-[5px] w-[100px] h-px bg-[#a6a6a6] relative">
            <span className="absolute left-[48px] top-[-6px] w-[5px] h-[13px] bg-[#777]" />
          </div>
          <svg className="ml-[4px]" width="9" height="9" viewBox="0 0 9 9"><path d="M0 4.500H9M4.500 0V9" stroke="#444" /></svg>
          <span className="ml-[13px] text-[11px] text-[#444] whitespace-nowrap">100 %</span>
        </div>
      </div>
    </div>
  );
}
